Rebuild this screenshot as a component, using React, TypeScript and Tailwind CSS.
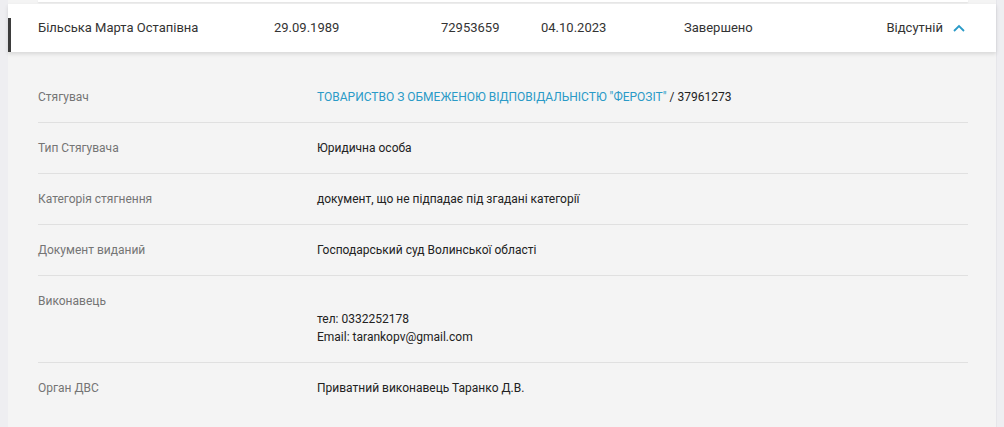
import React, { FC } from 'react'

const ROWS: { label: string; value: React.ReactNode }[] = [
  {
    label: 'Стягувач',
    value: (
      <span>
        <span className="text-[#2a9ac7]">
          ТОВАРИСТВО З ОБМЕЖЕНОЮ ВІДПОВІДАЛЬНІСТЮ "ФЕРОЗІТ"
        </span>{' '}
        / 37961273
      </span>
    ),
  },
  { label: 'Тип Стягувача', value: 'Юридична особа' },
  { label: 'Категорія стягнення', value: 'документ, що не підпадає під згадані категорії' },
  { label: 'Документ виданий', value: 'Господарський суд Волинської області' },
  {
    label: 'Виконавець',
    value: (
      <div className="flex flex-col">
        <span className="h-[18px]" />
        <span>тел: 0332252178</span>
        <span>Email: tarankopv@gmail.com</span>
      </div>
    ),
  },
  { label: 'Орган ДВС', value: 'Приватний виконавець Таранко Д.В.' },
]

const ChevronUp: FC = () => (
  <svg width="12" height="8" viewBox="0 0 12 8" fill="none">
    <path d="M1 7L6 2L11 7" stroke="#2a9ac7" strokeWidth="1.8" />
  </svg>
)

export default function App() {
  return (
    <div
      className="w-[1004px] h-[427px] overflow-hidden bg-[#eeeef1] pl-[8px] pr-[7px]"
      style={{ fontFamily: 'Roboto, "Noto Sans", sans-serif' }}
    >
      <div className="h-full bg-[#f4f4f4] border-r border-[#e6e6ea] flex flex-col">
        <div className="h-[4px] pl-[30px] pr-[28px] shrink-0">
          <div className="h-[2px] bg-white shadow-[0_1px_2px_rgba(0,0,0,0.08)]" />
        </div>
        <div className="relative h-[48px] bg-white shrink-0 shadow-[0_2px_4px_rgba(0,0,0,0.12)] flex items-center pl-[30px] pr-[28px] text-[13px] text-[#333]">
          <div className="absolute left-0 top-[14px] bottom-0 w-[3px] bg-[#3d3d3d]" />
          <span className="w-[236px]">Більська Марта Остапівна</span>
          <span className="w-[167px]">29.09.1989</span>
          <span className="w-[100px]">72953659</span>
          <span className="w-[143px]">04.10.2023</span>
          <span className="flex-1">Завершено</span>
          <span className="flex items-center gap-[10px] pr-[3px]">
            Відсутній
            <ChevronUp />
          </span>
        </div>
        <div className="pt-[20px] pl-[30px] pr-[28px] text-[12px]">
          {ROWS.map((row, i) => (
            <div
              key={row.label}
              className={`flex items-start py-[16px] leading-[18px] ${
                i < ROWS.length - 1 ? 'border-b border-[#e0e0e0]' : ''
              }`}
            >
              <div className="w-[279px] text-[#757575]">{row.label}</div>
              <div className="flex-1 text-[#222]">{row.value}</div>
            </div>
          ))}
        </div>
      </div>
    </div>
  )
}
